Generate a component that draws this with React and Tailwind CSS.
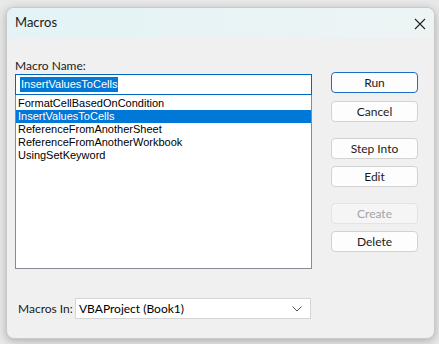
import React from "react";

const ui = { fontFamily: 'Lato, "Noto Sans", sans-serif' };
const ms = { fontFamily: '"Liberation Sans", Arial, sans-serif' };

function Btn({ children, className = "", disabled = false, primary = false }) {
  return (
    <div
      className={
        "flex h-[21px] w-[87px] items-center justify-center rounded-[4px] border text-[12px] " +
        (disabled
          ? "border-[#e3e3e3] bg-[#f5f5f5] text-[#a3a3a3] "
          : primary
          ? "border-[#1a6ec4] bg-[#fdfdfd] text-[#1b1b1b] "
          : "border-[#d2d2d2] bg-[#fdfdfd] text-[#1b1b1b] ") +
        className
      }
      style={ui}
    >
      {children}
    </div>
  );
}

export default function App() {
  const items = [
    "FormatCellBasedOnCondition",
    "InsertValuesToCells",
    "ReferenceFromAnotherSheet",
    "ReferenceFromAnotherWorkbook",
    "UsingSetKeyword",
  ];
  return (
    <div className="h-[344px] w-[439px] overflow-hidden bg-[#e8e8e8] pl-[6px] pt-[7px]">
      <div className="flex h-[332px] w-[429px] flex-col overflow-hidden rounded-[8px] border border-[#c9c9c9] bg-[#f0f0f0] shadow-[0_2px_8px_rgba(0,0,0,0.25)]">
        <div className="flex h-[30px] shrink-0 items-center justify-between bg-gradient-to-r from-[#e3f3f6] to-[#eef4f4] pl-[8px] pr-[8px]">
          <span className="text-[13px] text-[#1b1b1b]" style={ui}>Macros</span>
          <svg width="12" height="12" viewBox="0 0 12 12" className="mt-[1px]">
            <path d="M1 1 L11 11 M11 1 L1 11" stroke="#222" strokeWidth="1.1" fill="none" />
          </svg>
        </div>
        <div className="flex flex-1 flex-col px-[8px]">
          <div className="flex">
            <div className="flex w-[297px] flex-col">
              <div className="mt-[19px] h-[17px] text-[12px] leading-[17px] text-[#1b1b1b]" style={ui}>Macro Name:</div>
              <div className="flex h-[21px] items-center border border-[#0067c0] bg-white pl-[4px]">
                <span className="bg-[#0078d7] px-[1px] text-[11px] leading-[15px] text-white" style={ms}>InsertValuesToCells</span>
              </div>
              <div className="h-[174px] border border-t-0 border-[#8a8a95] bg-white pt-[2px]">
                {items.map((it, i) => (
                  <div
                    key={it}
                    className={
                      "h-[13px] pl-[2px] text-[11px] leading-[13px] " +
                      (i === 1 ? "bg-[#0078d7] text-white" : "text-black")
                    }
                    style={ms}
                  >
                    {it}
                  </div>
                ))}
              </div>
            </div>
            <div className="ml-[19px] flex flex-col pt-[34px]">
              <Btn primary>Run</Btn>
              <Btn className="mt-[8px]">Cancel</Btn>
              <Btn className="mt-[16px]">Step Into</Btn>
              <Btn className="mt-[7px]">Edit</Btn>
              <Btn className="mt-[16px]" disabled>Create</Btn>
              <Btn className="mt-[7px]">Delete</Btn>
            </div>
          </div>
          <div className="mt-[29px] flex items-center">
            <span className="ml-[3px] w-[57px] shrink-0 whitespace-nowrap text-[12px] text-[#1b1b1b]" style={ui}>Macros In:</span>
            <div className="flex h-[21px] w-[236px] items-center justify-between border border-[#d5d5d5] bg-white pl-[3px] pr-[8px]">
              <span className="text-[12px] text-black" style={ui}>VBAProject (Book1)</span>
              <svg width="10" height="6" viewBox="0 0 10 6">
                <path d="M0.5 0.5 L5 5 L9.5 0.5" stroke="#555" strokeWidth="1" fill="none" />
              </svg>
            </div>
          </div>
        </div>
      </div>
    </div>
  );
}
